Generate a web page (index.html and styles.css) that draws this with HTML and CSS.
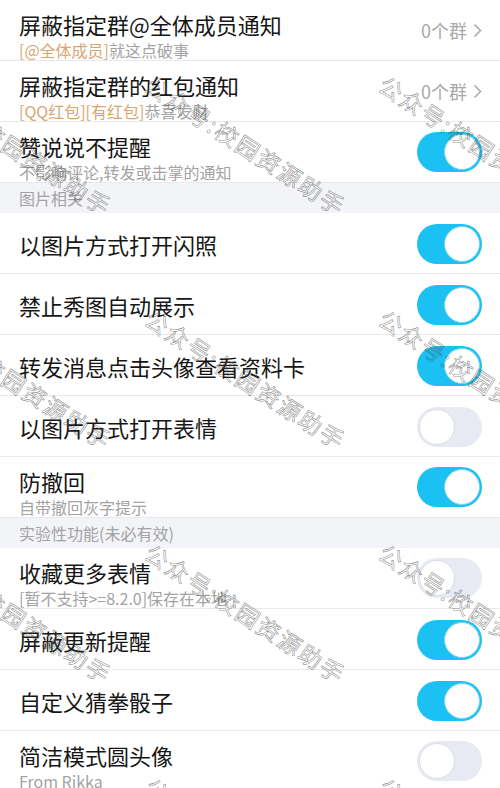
FILE: index.html
```html
<!DOCTYPE html>
<html>
  <head>
    <title>设置</title>
    <meta name="viewport" content="width=device-width, initial-scale=1" />
    <link rel="stylesheet" href="styles.css">
  </head>
  <body>
    <div class="screen">
      <div class="list">
        <div class="row two">
          <div class="texts">
            <div class="title">屏蔽指定群@全体成员通知</div>
            <div class="sub"><span class="tag">[@全体成员]</span>就这点破事</div>
          </div>
          <div class="extra">
            0个群
            <svg width="9" height="15" viewBox="0 0 9 15"><path d="M1.5 1.5 L7.5 7.5 L1.5 13.5" fill="none" stroke="#a9a9a9" stroke-width="1.5" /></svg>
          </div>
        </div>
        <div class="row two">
          <div class="texts">
            <div class="title">屏蔽指定群的红包通知</div>
            <div class="sub"><span class="tag">[QQ红包][有红包]</span>恭喜发财</div>
          </div>
          <div class="extra">
            0个群
            <svg width="9" height="15" viewBox="0 0 9 15"><path d="M1.5 1.5 L7.5 7.5 L1.5 13.5" fill="none" stroke="#a9a9a9" stroke-width="1.5" /></svg>
          </div>
        </div>
        <div class="row two">
          <div class="texts">
            <div class="title">赞说说不提醒</div>
            <div class="sub">不影响评论,转发或击掌的通知</div>
          </div>
          <div class="switch on"><span class="knob"></span></div>
        </div>

        <div class="section">图片相关</div>

        <div class="row">
          <div class="title">以图片方式打开闪照</div>
          <div class="switch on"><span class="knob"></span></div>
        </div>
        <div class="row">
          <div class="title">禁止秀图自动展示</div>
          <div class="switch on"><span class="knob"></span></div>
        </div>
        <div class="row">
          <div class="title">转发消息点击头像查看资料卡</div>
          <div class="switch on"><span class="knob"></span></div>
        </div>
        <div class="row">
          <div class="title">以图片方式打开表情</div>
          <div class="switch"><span class="knob"></span></div>
        </div>
        <div class="row two">
          <div class="texts">
            <div class="title">防撤回</div>
            <div class="sub">自带撤回灰字提示</div>
          </div>
          <div class="switch on"><span class="knob"></span></div>
        </div>

        <div class="section">实验性功能(未必有效)</div>

        <div class="row two">
          <div class="texts">
            <div class="title">收藏更多表情</div>
            <div class="sub">[暂不支持&gt;=8.2.0]保存在本地</div>
          </div>
          <div class="switch"><span class="knob"></span></div>
        </div>
        <div class="row">
          <div class="title">屏蔽更新提醒</div>
          <div class="switch on"><span class="knob"></span></div>
        </div>
        <div class="row">
          <div class="title">自定义猜拳骰子</div>
          <div class="switch on"><span class="knob"></span></div>
        </div>
        <div class="row two">
          <div class="texts">
            <div class="title">简洁模式圆头像</div>
            <div class="sub">From Rikka</div>
          </div>
          <div class="switch"><span class="knob"></span></div>
        </div>
      </div>

      <!-- watermark overlay -->
      <div class="watermarks">
        <span class="wm" style="left: 156px; top: 69px">公众号:校园资源助手</span>
        <span class="wm" style="left: 390px; top: 69px">公众号:校园资源助手</span>
        <span class="wm" style="left: -78px; top: 69px">公众号:校园资源助手</span>
        <span class="wm" style="left: 156px; top: 303px">公众号:校园资源助手</span>
        <span class="wm" style="left: 390px; top: 303px">公众号:校园资源助手</span>
        <span class="wm" style="left: -78px; top: 303px">公众号:校园资源助手</span>
        <span class="wm" style="left: 156px; top: 537px">公众号:校园资源助手</span>
        <span class="wm" style="left: 390px; top: 537px">公众号:校园资源助手</span>
        <span class="wm" style="left: -78px; top: 537px">公众号:校园资源助手</span>
        <span class="wm" style="left: 156px; top: 771px">公众号:校园资源助手</span>
        <span class="wm" style="left: 390px; top: 771px">公众号:校园资源助手</span>
        <span class="wm" style="left: -78px; top: 771px">公众号:校园资源助手</span>
      </div>
    </div>
  </body>
</html>
```

FILE: styles.css
```css
html,
body {
  margin: 0;
  padding: 0;
  background: #fff;
}

body {
  font-family: "Noto Sans CJK SC", "Noto Sans", sans-serif;
  color: #161616;
}

.screen {
  position: relative;
  width: 500px;
  height: 788px;
  overflow: hidden;
}

.row {
  display: flex;
  align-items: center;
  justify-content: space-between;
  height: 61px;
  box-sizing: border-box;
  padding: 1px 18px 0 19px;
  border-bottom: 1px solid #e9e9eb;
}

.row.two {
  padding-top: 0;
}

.row.two .texts {
  align-self: flex-start;
  padding-top: 9px;
}

.title {
  font-size: 22px;
  line-height: 30px;
  white-space: nowrap;
}

.sub {
  font-size: 16px;
  line-height: 22px;
  color: #a3a3a3;
  white-space: nowrap;
}

.tag {
  color: #d9a66f;
}

.extra {
  display: flex;
  align-items: center;
  gap: 6px;
  font-size: 18px;
  color: #a9a9a9;
}

.section {
  height: 30px;
  line-height: 30px;
  padding-left: 19px;
  font-size: 16px;
  color: #a3a3a3;
  background: #f3f4f8;
}

.switch {
  display: flex;
  align-items: center;
  justify-content: flex-start;
  width: 65px;
  height: 40px;
  box-sizing: border-box;
  padding: 2px;
  border-radius: 20px;
  background: #e8eaf3;
  flex-shrink: 0;
}

.switch.on {
  justify-content: flex-end;
  background: #1cc1f4;
}

.knob {
  width: 36px;
  height: 36px;
  box-sizing: border-box;
  border-radius: 50%;
  background: #fff;
  border: 1.5px solid #dcdde2;
}

.switch.on .knob {
  border-color: #7fd2ea;
}

.watermarks {
  position: absolute;
  inset: 0;
  pointer-events: none;
}

.wm {
  position: absolute;
  transform-origin: 0 0;
  transform: rotate(33deg);
  font-size: 23px;
  line-height: 30px;
  letter-spacing: 2px;
  white-space: nowrap;
  color: transparent;
  -webkit-text-stroke: 0.6px rgba(70, 70, 70, 0.6);
}
```
